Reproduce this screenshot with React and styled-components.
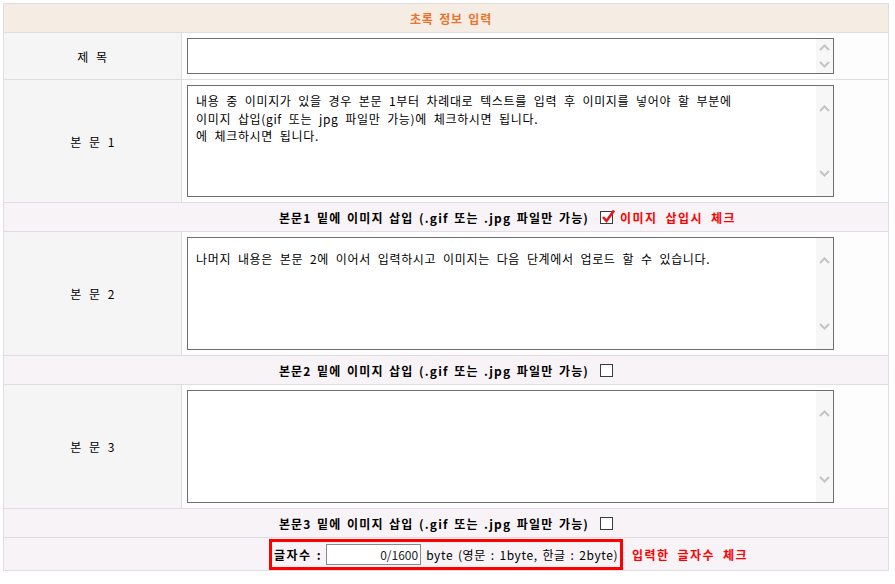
import React from "react";
import styled, { createGlobalStyle } from "styled-components";

// Abstract entry form: header, titled textareas, image-insert checks and byte counter

const GlobalStyle = createGlobalStyle`
  body {
    margin: 0;
    background: #fff;
    font-family: "Noto Sans CJK KR", "Liberation Sans", sans-serif;
    font-size: 12px;
    color: #000;
  }
`;

const Page = styled.div`
  padding: 3px;
`;

const Board = styled.div`
  display: grid;
  grid-template-columns: 177px 706px;
  grid-template-rows: 28px 46px 122px 28px 123px 28px 123px 28px 32px;
  gap: 1px;
  width: max-content;
  background: #e1dce1;
  border: 1px solid #e1dce1;
`;

const Header = styled.div`
  grid-column: 1 / -1;
  display: flex;
  align-items: center;
  justify-content: center;
  padding-left: 10px;
  background: #f5ede3;
  color: #e8742e;
  font-weight: bold;
  letter-spacing: 0.8px;
  word-spacing: 2px;
`;

const Label = styled.div`
  display: flex;
  align-items: center;
  justify-content: center;
  background: #f5f5f5;
  letter-spacing: 0.5px;
  word-spacing: 4px;
`;

const Field = styled.div`
  display: flex;
  align-items: flex-start;
  padding: 5px 0 0 5px;
  background: #fdfdfd;
`;

const Box = styled.div`
  display: flex;
  width: 647px;
  height: ${(p) => p.$h}px;
  box-sizing: border-box;
  border: 1px solid #6e6e6e;
  background: #fff;
`;

const Area = styled.textarea`
  flex: 1;
  border: none;
  outline: none;
  resize: none;
  overflow: hidden;
  margin: 0;
  padding: ${(p) => p.$top}px 6px 0 8px;
  font-family: "Noto Sans CJK KR", "Liberation Sans", sans-serif;
  font-size: 12px;
  line-height: 17.5px;
  letter-spacing: 0.65px;
  word-spacing: 3.5px;
  color: #000;
  background: #fff;
`;

const Track = styled.div`
  width: 17px;
  display: flex;
  flex-direction: column;
  justify-content: space-between;
  align-items: center;
  padding: ${(p) => p.$pad}px 0;
  background: #f7f7f7;
`;

const CheckRow = styled.div`
  grid-column: 1 / -1;
  display: grid;
  grid-template-columns: 1fr auto 1fr;
  align-items: center;
  background: #f7f3f6;
  font-weight: bold;
  letter-spacing: 1.2px;
  word-spacing: 1.5px;
`;

const Middle = styled.div`
  display: flex;
  align-items: center;
`;

const Tick = styled.span`
  position: relative;
  display: inline-block;
  width: 13px;
  height: 13px;
  box-sizing: border-box;
  margin-left: 11px;
  border: 1px solid #3c3c3c;
  background: #fff;
`;

const Mark = styled.svg`
  position: absolute;
  left: 0;
  top: -3px;
`;

const RedNote = styled.span`
  justify-self: start;
  margin-left: ${(p) => p.$gap}px;
  color: #f00;
  font-weight: bold;
  letter-spacing: 1.4px;
  word-spacing: 4px;
`;

const CountRow = styled(CheckRow)`
  align-items: end;
  font-weight: normal;
  letter-spacing: 0;
  word-spacing: 0;
`;

const CountBox = styled.div`
  display: flex;
  align-items: center;
  height: 31px;
  box-sizing: border-box;
  padding: 0 2px;
  border: 3px solid #f00;
  letter-spacing: 0.6px;
  word-spacing: 1.5px;
`;

const CountLabel = styled.b`
  margin-right: 4px;
  letter-spacing: 1.5px;
  word-spacing: 1px;
`;

const CountInput = styled.input`
  width: 95px;
  height: 21px;
  box-sizing: border-box;
  margin: 0 5px 0 0;
  padding: 0 2px;
  border: 1px solid #8a8a8a;
  text-align: right;
  font-family: "Noto Sans CJK KR", "Liberation Sans", sans-serif;
  font-size: 12px;
  color: #222;
  background: #fff;
`;

const Chevron = ({ up }) => (
  <svg width="11" height="7" viewBox="0 0 11 7">
    <polyline
      points={up ? "1,6 5.5,1.5 10,6" : "1,1 5.5,5.5 10,1"}
      fill="none"
      stroke="#c4c4c4"
      strokeWidth="2"
    />
  </svg>
);

const TextBox = ({ h, pad, top, value }) => (
  <Box $h={h}>
    <Area $top={top} defaultValue={value} />
    <Track $pad={pad}>
      <Chevron up />
      <Chevron />
    </Track>
  </Box>
);

const Check = ({ checked }) => (
  <Tick>
    {checked && (
      <Mark width="15" height="15" viewBox="0 0 15 15">
        <polyline
          points="2,8 5.5,12 13,1.5"
          fill="none"
          stroke="#e8141e"
          strokeWidth="2.6"
        />
      </Mark>
    )}
  </Tick>
);

const InsertRow = ({ n, checked }) => (
  <CheckRow>
    <span />
    <Middle>
      본문{n} 밑에 이미지 삽입 (.gif 또는 .jpg 파일만 가능)
      <Check checked={checked} />
    </Middle>
    {checked ? <RedNote $gap={7}>이미지 삽입시 체크</RedNote> : <span />}
  </CheckRow>
);

const body1 =
  "내용 중 이미지가 있을 경우 본문 1부터 차례대로 텍스트를 입력 후 이미지를 넣어야 할 부분에\n이미지 삽입(gif 또는 jpg 파일만 가능)에 체크하시면 됩니다.\n에 체크하시면 됩니다.";
const body2 =
  "나머지 내용은 본문 2에 이어서 입력하시고 이미지는 다음 단계에서 업로드 할 수 있습니다.";

export default function App() {
  return (
    <Page>
      <GlobalStyle />
      <Board>
        <Header>초록 정보 입력</Header>

        <Label>제 목</Label>
        <Field>
          <TextBox h={36} pad={5} top={4} value="" />
        </Field>

        <Label>본 문 1</Label>
        <Field>
          <TextBox h={112} pad={19} top={6} value={body1} />
        </Field>
        <InsertRow n={1} checked />

        <Label>본 문 2</Label>
        <Field>
          <TextBox h={113} pad={19} top={12} value={body2} />
        </Field>
        <InsertRow n={2} />

        <Label>본 문 3</Label>
        <Field>
          <TextBox h={113} pad={19} top={8} value="" />
        </Field>
        <InsertRow n={3} />

        <CountRow>
          <span />
          <CountBox>
            <CountLabel>글자수 :</CountLabel>
            <CountInput defaultValue="0/1600" />
            byte (영문 : 1byte, 한글 : 2byte)
          </CountBox>
          <RedNote $gap={9} style={{ alignSelf: "center" }}>
            입력한 글자수 체크
          </RedNote>
        </CountRow>
      </Board>
    </Page>
  );
}
